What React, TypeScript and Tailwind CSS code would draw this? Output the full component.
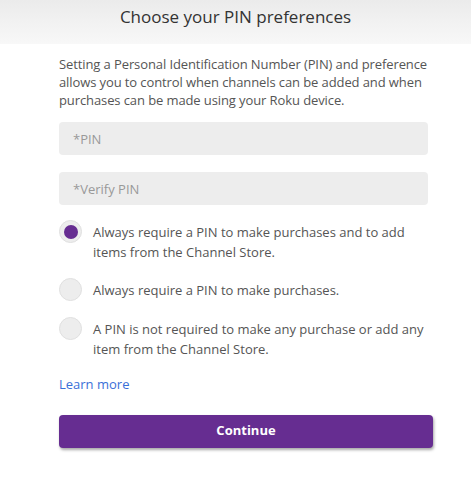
import React, { useState } from "react";

const options = [
  "Always require a PIN to make purchases and to add items from the Channel Store.",
  "Always require a PIN to make purchases.",
  "A PIN is not required to make any purchase or add any item from the Channel Store.",
];

export default function App() {
  const [choice, setChoice] = useState(0);

  return (
    <div className="w-[471px] h-[478px] bg-white text-[#444] font-['Open_Sans',sans-serif]">
      <div className="h-[44px] flex justify-center pt-[4px] bg-gradient-to-b from-[#ebebeb] to-[#f8f8f8]">
        <h1 className="text-[17px] leading-[26px] text-[#333]">Choose your PIN preferences</h1>
      </div>

      <div className="pl-[59px]">
        <p className="mt-[11px] w-[392px] text-[13px] leading-[18px] text-[#555] tracking-[-0.1px]">
          Setting a Personal Identification Number (PIN) and preference allows you to control when
          channels can be added and when purchases can be made using your Roku device.
        </p>

        <div className="mt-[13px] flex flex-col gap-[17px] w-[369px]">
          <input
            placeholder="*PIN"
            className="h-[33px] rounded-[4px] bg-[#ededed] px-[14px] text-[13px] placeholder:text-[#999] outline-none"
          />
          <input
            placeholder="*Verify PIN"
            className="h-[33px] rounded-[4px] bg-[#ededed] px-[14px] text-[13px] placeholder:text-[#999] outline-none"
          />
        </div>

        <div className="mt-[17px] flex flex-col gap-[18px] w-[369px]">
          {options.map((label, i) => (
            <label key={i} className="flex items-start gap-[11px] cursor-pointer" onClick={() => setChoice(i)}>
              <span className="mt-[-2px] w-[23px] h-[23px] shrink-0 rounded-full bg-[#ededed] border border-[#e0e0e0] flex items-center justify-center">
                {choice === i && <span className="w-[14px] h-[14px] rounded-full bg-[#662d91]" />}
              </span>
              <span className="text-[13px] leading-[20px] text-[#555]">{label}</span>
            </label>
          ))}
        </div>

        <a href="#" className="block mt-[16px] text-[13px] text-[#3a6fd8]">Learn more</a>

        <button className="mt-[20px] w-[374px] h-[33px] rounded-[4px] bg-[#662d91] text-white text-[13px] font-bold shadow-[1px_2px_3px_rgba(0,0,0,0.35)]">
          Continue
        </button>
      </div>
    </div>
  );
}
